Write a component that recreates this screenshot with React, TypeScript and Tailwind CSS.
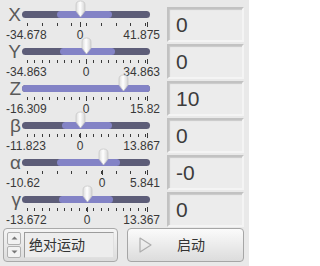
const font = "font-['Liberation_Sans','Noto_Sans_CJK_SC',sans-serif]";

type Axis = {
  label: string;
  min: string;
  max: string;
  zero: number;
  thumb: number;
  fill: [number, number];
  ticks: number;
  value: string;
};

// positions are in px from the left edge of the track (track is 128px wide, starts at x=22)
const axes: Axis[] = [
  { label: "X", min: "-34.678", max: "41.875", zero: 58, thumb: 58, fill: [35, 90], ticks: 9, value: "0" },
  { label: "Y", min: "-34.863", max: "34.863", zero: 64, thumb: 64, fill: [38, 93], ticks: 17, value: "0" },
  { label: "Z", min: "-16.309", max: "15.82", zero: 64, thumb: 101, fill: [0, 128], ticks: 17, value: "10" },
  { label: "β", min: "-11.823", max: "13.867", zero: 58, thumb: 58, fill: [40, 90], ticks: 17, value: "0" },
  { label: "α", min: "-10.62", max: "5.841", zero: 80, thumb: 81, fill: [35, 98], ticks: 9, value: "-0" },
  { label: "γ", min: "-13.672", max: "13.367", zero: 65, thumb: 65, fill: [37, 91], ticks: 17, value: "0" },
];

const Thumb = ({ left }: { left: number }) => (
  <svg
    width="11"
    height="18"
    viewBox="0 0 11 18"
    className="absolute top-[-11px]"
    style={{ left: left - 5.5 }}
  >
    <defs>
      <linearGradient id="thumbGrad" x1="0" y1="0" x2="1" y2="0">
        <stop offset="0" stopColor="#dcdcdc" />
        <stop offset="0.45" stopColor="#ffffff" />
        <stop offset="1" stopColor="#d4d4d4" />
      </linearGradient>
    </defs>
    <path
      d="M1 5 Q1 1 5.5 1 Q10 1 10 5 L10 11 L5.5 17 L1 11 Z"
      fill="url(#thumbGrad)"
      stroke="#c8c8c8"
      strokeWidth="0.8"
    />
  </svg>
);

const Ticks = ({ count, zero }: { count: number; zero: number }) => {
  const start = 5;
  const end = 123;
  const step = (end - start) / (count - 1);
  const xs = Array.from({ length: count }, (_, i) => start + i * step);
  return (
    <svg width="128" height="5" className="ml-[22px] mt-[4px] block">
      {xs.map((x, i) => (
        <line key={i} x1={Math.round(x) + 0.5} y1="1" x2={Math.round(x) + 0.5} y2="4" stroke="#3a3a3a" strokeWidth="1" />
      ))}
      <line x1={zero + 0.5} y1="0" x2={zero + 0.5} y2="5" stroke="#3a3a3a" strokeWidth="1" />
      <line x1={end + 2.5} y1="0" x2={end + 2.5} y2="5" stroke="#3a3a3a" strokeWidth="1" />
    </svg>
  );
};

const SliderRow = ({ axis }: { axis: Axis }) => (
  <div className="flex h-[37px]">
    <div className="w-[167px]">
      <div className="mt-[11px] flex h-[7px] items-center">
        <span className="w-[22px] pr-[1px] text-right text-[19px] leading-none text-[#5a5a5a]">{axis.label}</span>
        <div className="relative h-[7px] w-[128px] rounded-full bg-[#5d5d78]">
          <div
            className="absolute top-0 h-[7px] rounded-full bg-[#8383c6]"
            style={{ left: axis.fill[0], width: axis.fill[1] - axis.fill[0] }}
          />
          <Thumb left={axis.thumb} />
        </div>
      </div>
      <Ticks count={axis.ticks} zero={axis.zero} />
      <div className="relative mt-[1px] flex h-[14px] justify-between pl-[6px] pr-[7px] text-[12px] leading-[14px] text-[#383838]">
        <span>{axis.min}</span>
        <span
          className="absolute top-0 w-[14px] -translate-x-1/2 text-center"
          style={{ left: 22 + axis.zero }}
        >
          0
        </span>
        <span>{axis.max}</span>
      </div>
    </div>
    <div className="pt-[7px]">
      <div className="flex h-[35px] w-[77px] items-center border-2 border-t-[#c2c2c2] border-l-[#c2c2c2] border-r-[#f4f4f4] border-b-[#f4f4f4] bg-[#ececec] pl-[7px] text-[21px] text-[#3c3c3c] shadow-[inset_1px_1px_1px_rgba(0,0,0,0.15)]">
        {axis.value}
      </div>
    </div>
  </div>
);

export default function App() {
  return (
    <div className={`h-[266px] w-[249px] overflow-hidden bg-[#e9e9e9] ${font}`}>
      {axes.map((a) => (
        <SliderRow key={a.label} axis={a} />
      ))}

      <div className="mt-[6px] flex gap-[9px] pl-[3px]">
        {/* ring / enum control */}
        <div className="flex h-[34px] w-[115px] gap-[3px] rounded-[4px] border border-[#a9a9a9] bg-gradient-to-b from-[#f5f5f5] to-[#dcdcdc] p-[3px]">
          <div className="flex w-[14px] flex-col gap-[1px]">
            <div className="flex flex-1 items-center justify-center rounded-[2px] border border-[#b0b0b0] bg-[#f2f2f2]">
              <svg width="7" height="4" viewBox="0 0 7 4">
                <path d="M0.5 3.5 L3.5 0.5 L6.5 3.5 Z" fill="#777" />
              </svg>
            </div>
            <div className="flex flex-1 items-center justify-center rounded-[2px] border border-[#b0b0b0] bg-[#f2f2f2]">
              <svg width="7" height="4" viewBox="0 0 7 4">
                <path d="M0.5 0.5 L3.5 3.5 L6.5 0.5 Z" fill="#777" />
              </svg>
            </div>
          </div>
          <div className="flex flex-1 items-center border border-t-[#9c9c9c] border-l-[#9c9c9c] border-r-[#e0e0e0] border-b-[#e0e0e0] bg-[#ededed] pl-[4px] text-[14px] text-[#333]">
            绝对运动
          </div>
        </div>

        {/* start button */}
        <div className="flex h-[34px] w-[117px] items-center rounded-[4px] border border-[#a6a6a6] bg-gradient-to-b from-[#fbfbfb] to-[#dcdcdc] pl-[11px]">
          <svg width="13" height="16" viewBox="0 0 13 16">
            <path d="M1 1 L12 8 L1 15 Z" fill="none" stroke="#adadad" strokeWidth="1.2" strokeLinejoin="round" />
          </svg>
          <span className="ml-[25px] text-[14px] text-[#333]">启动</span>
        </div>
      </div>
    </div>
  );
}
